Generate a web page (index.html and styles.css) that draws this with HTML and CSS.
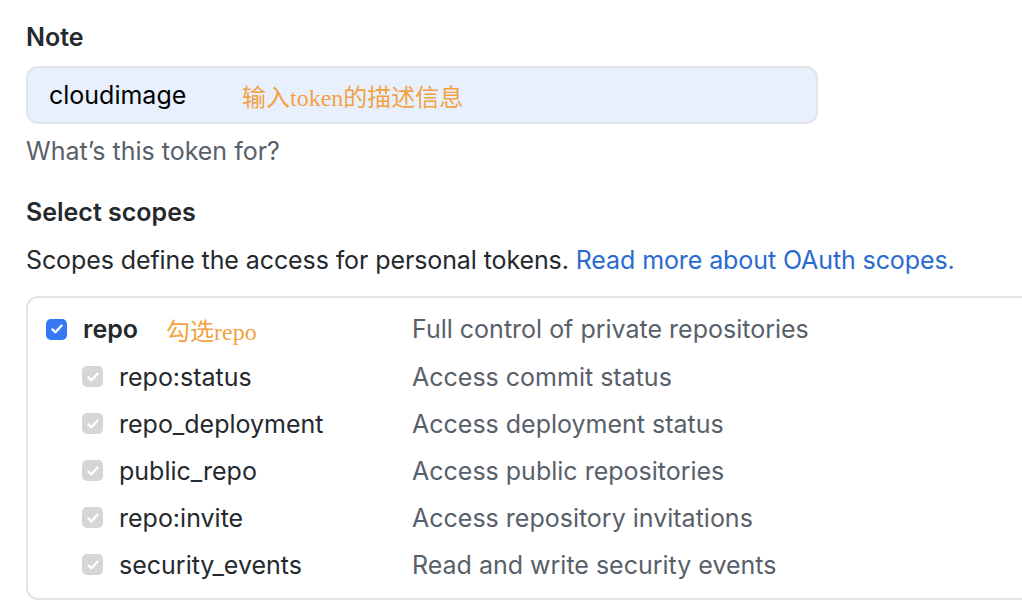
FILE: index.html
```html
<!DOCTYPE html>
<html>
<head>
<meta charset="utf-8">
<link rel="stylesheet" href="styles.css">
</head>
<body>
<div class="page">
  <div class="label">Note</div>
  <div class="input">
    <span class="value">cloudimage</span>
    <span class="anno anno-input">输入token的描述信息</span>
  </div>
  <div class="hint">What’s this token for?</div>

  <div class="label label-scopes">Select scopes</div>
  <div class="desc">Scopes define the access for personal tokens. <a class="link">Read more about OAuth scopes.</a></div>

  <div class="box">
    <div class="row row-main">
      <div class="left">
        <span class="cb cb-on"><svg viewBox="0 0 16 16" width="16" height="16"><path d="M3.4 8.4 L6.5 11.3 L12.6 4.6" fill="none" stroke="#fff" stroke-width="2.3" stroke-linecap="round" stroke-linejoin="round"/></svg></span>
        <span class="name bold">repo</span>
        <span class="anno anno-repo">勾选repo</span>
      </div>
      <div class="info">Full control of private repositories</div>
    </div>
    <div class="row sub">
      <div class="left">
        <span class="cb cb-dis"><svg viewBox="0 0 16 16" width="16" height="16"><path d="M3.4 8.4 L6.5 11.3 L12.6 4.6" fill="none" stroke="#fff" stroke-width="2.3" stroke-linecap="round" stroke-linejoin="round"/></svg></span>
        <span class="name">repo:status</span>
      </div>
      <div class="info">Access commit status</div>
    </div>
    <div class="row sub">
      <div class="left">
        <span class="cb cb-dis"><svg viewBox="0 0 16 16" width="16" height="16"><path d="M3.4 8.4 L6.5 11.3 L12.6 4.6" fill="none" stroke="#fff" stroke-width="2.3" stroke-linecap="round" stroke-linejoin="round"/></svg></span>
        <span class="name">repo_deployment</span>
      </div>
      <div class="info">Access deployment status</div>
    </div>
    <div class="row sub">
      <div class="left">
        <span class="cb cb-dis"><svg viewBox="0 0 16 16" width="16" height="16"><path d="M3.4 8.4 L6.5 11.3 L12.6 4.6" fill="none" stroke="#fff" stroke-width="2.3" stroke-linecap="round" stroke-linejoin="round"/></svg></span>
        <span class="name">public_repo</span>
      </div>
      <div class="info">Access public repositories</div>
    </div>
    <div class="row sub">
      <div class="left">
        <span class="cb cb-dis"><svg viewBox="0 0 16 16" width="16" height="16"><path d="M3.4 8.4 L6.5 11.3 L12.6 4.6" fill="none" stroke="#fff" stroke-width="2.3" stroke-linecap="round" stroke-linejoin="round"/></svg></span>
        <span class="name">repo:invite</span>
      </div>
      <div class="info">Access repository invitations</div>
    </div>
    <div class="row sub">
      <div class="left">
        <span class="cb cb-dis"><svg viewBox="0 0 16 16" width="16" height="16"><path d="M3.4 8.4 L6.5 11.3 L12.6 4.6" fill="none" stroke="#fff" stroke-width="2.3" stroke-linecap="round" stroke-linejoin="round"/></svg></span>
        <span class="name">security_events</span>
      </div>
      <div class="info">Read and write security events</div>
    </div>
  </div>
</div>
</body>
</html>
```

FILE: styles.css
```css
html, body {
  margin: 0;
  padding: 0;
  background: #fff;
  overflow: hidden;
}
body {
  font-family: Inter, "Noto Sans", "Noto Sans CJK SC", sans-serif;
  font-size: 25px;
  color: #24292e;
  width: 1022px;
  height: 600px;
}
.page {
  padding: 18px 0 0 26px;
}
.label {
  font-weight: 600;
  line-height: 38px;
  height: 38px;
}
.input {
  margin-top: 10px;
  width: 792px;
  height: 58px;
  box-sizing: border-box;
  border: 2px solid #e1e4e8;
  border-radius: 12px;
  background: #e8f0fe;
  display: flex;
  align-items: center;
  padding-left: 21px;
}
.value {
  color: #000;
  width: 193px;
}
.anno {
  font-family: "Liberation Serif", "Noto Sans CJK SC", serif;
  color: #f2a242;
  font-size: 24px;
}
.hint {
  color: #586069;
  line-height: 40px;
  margin-top: 7px;
}
.label-scopes {
  margin-top: 22px;
}
.desc {
  margin-top: 10px;
  line-height: 38px;
  letter-spacing: -0.1px;
}
.link {
  color: #2b6bd0;
}
.box {
  margin-top: 17px;
  border: 2px solid #e1e4e8;
  border-right: none;
  border-radius: 12px 0 0 12px;
  height: 304px;
  box-sizing: border-box;
  padding-top: 7px;
}
.row {
  display: flex;
  align-items: center;
  height: 47px;
}
.row-main {
  height: 48px;
}
.left {
  display: flex;
  align-items: center;
  width: 384px;
  padding-left: 18px;
  box-sizing: border-box;
}
.sub .left {
  padding-left: 54px;
}
.cb {
  width: 21px;
  height: 21px;
  border-radius: 5px;
  display: flex;
  align-items: center;
  justify-content: center;
  margin-right: 16px;
  flex: none;
}
.cb-on {
  background: #3478f6;
}
.cb-dis {
  background: #d6d6d6;
}
.bold {
  font-weight: 600;
}
.anno-repo {
  margin-left: 28px;
}
.info {
  color: #586069;
}
```
